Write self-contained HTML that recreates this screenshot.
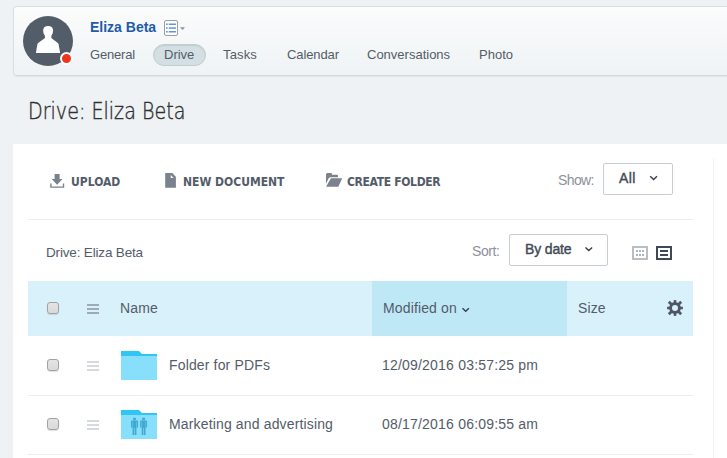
<!DOCTYPE html>
<html><head><meta charset="utf-8">
<style>
*{box-sizing:border-box;margin:0;padding:0}
html,body{width:727px;height:458px;overflow:hidden}
body{background:#eef2f4;font-family:"Liberation Sans",Arial,sans-serif;color:#535c69;position:relative;font-size:14px}
.abs{position:absolute;white-space:nowrap}
#hdr{left:13px;top:6px;width:730px;height:70px;border:1px solid #d8dfe3;border-bottom-color:#d3dadf;border-radius:4px 0 0 4px;background:linear-gradient(#fbfcfc,#eff3f5);box-shadow:0 1px 1px rgba(0,0,0,.05)}
#avatar{left:23px;top:16px;width:50px;height:50px;border-radius:50%;background:#535c69;overflow:hidden}
#dot{left:60px;top:52px;width:13px;height:13px;border-radius:50%;background:#ee351c;border:2px solid #fff}
#uname{left:90px;top:19px;font-size:14px;font-weight:bold;color:#1f5ba8;line-height:16px}
.tab{top:47px;font-size:13px;line-height:16px;color:#535c69}
#pill{left:153px;top:44px;width:53px;height:22px;border-radius:11px;background:#d3dfe3;border:1px solid #c0cdd2;box-shadow:inset 0 1px 1px rgba(0,0,0,.08)}
#title{left:28px;top:96px;font-size:22.4px;line-height:30px;color:#333;font-family:"DejaVu Sans Light","DejaVu Sans",sans-serif;font-weight:200;transform-origin:0 0;transform:scaleX(.853);-webkit-text-stroke:.38px #2d2d2d}
#panel{left:13px;top:144px;width:714px;height:330px;background:#fff}
.btn{top:174px;font-family:"DejaVu Sans Condensed","DejaVu Sans",sans-serif;font-weight:bold;font-size:12px;line-height:16px;color:#535c69}
.hr{height:1px;background:#ededee}
.lbl{color:#8c929a;font-size:14px;line-height:16px;letter-spacing:-.5px}
.sel{border:1px solid #c6cdd3;border-radius:2px;background:#fff}
.selt{font-size:14px;line-height:16px;color:#424956;-webkit-text-stroke:.4px #424956}
#thead{left:28px;top:281px;width:665px;height:55px;background:#d9f1fb}
#thmod{left:372px;top:281px;width:195px;height:55px;background:#bfe8f7}
.th{top:300px;font-size:14px;line-height:16px;color:#535c69;letter-spacing:.14px}
.cb{width:12px;height:12px;border:1px solid #a2a2a2;border-radius:3px;background:linear-gradient(#e4e4e4,#dadada);box-shadow:0 1px 1px rgba(0,0,0,.12)}
.row{font-size:14px;line-height:16px;color:#535c69;letter-spacing:.15px}
svg{overflow:visible}
</style></head><body>
<div id="hdr" class="abs"></div>
<div id="avatar" class="abs"><svg width="50" height="50" viewBox="0 0 50 50"><path d="M25.100 9.900C22 9.900 20.300 11.500 20.200 14c-.1 2 .4 4 1.600 5.500l.2 2.500-6.500 4.800c-.7.500-1 1-1.200 1.800l-1.400 8.300h24.200l-1.400-8.300c-.2-.8-.5-1.300-1.200-1.800L28.300 22l.2-2.500c1.200-1.500 1.700-3.500 1.600-5.500-.1-2.500-1.900-4.100-5-4.100z" fill="#fff"/></svg></div>
<div id="dot" class="abs"></div>
<div id="uname" class="abs">Eliza Beta</div>
<svg class="abs" style="left:164px;top:20px" width="24" height="17" viewBox="0 0 24 17"><rect x=".5" y=".5" width="13" height="15" rx="1.500" fill="#fff" stroke="#9a9fa5"/><g fill="#6595d3"><rect x="2" y="3.500" width="1.700" height="1.500"/><rect x="4.700" y="3.500" width="7.300" height="1.500"/><rect x="2" y="7.300" width="1.700" height="1.500"/><rect x="4.700" y="7.300" width="7.300" height="1.500"/><rect x="2" y="11" width="1.700" height="1.500"/><rect x="4.700" y="11" width="7.300" height="1.500"/></g><path d="M16 7.300h5l-2.500 2.700z" fill="#8b929b"/></svg>
<div id="pill" class="abs"></div>
<div class="abs tab" style="left:90px;letter-spacing:-.2px">General</div>
<div class="abs tab" style="left:164px">Drive</div>
<div class="abs tab" style="left:223px;letter-spacing:.15px">Tasks</div>
<div class="abs tab" style="left:287px;letter-spacing:-.1px">Calendar</div>
<div class="abs tab" style="left:367px">Conversations</div>
<div class="abs tab" style="left:479px">Photo</div>
<div id="title" class="abs">Drive: Eliza Beta</div>
<div id="panel" class="abs"></div>
<div class="abs" style="left:713px;top:159px;width:1px;height:300px;background:#eef0f2"></div>

<svg class="abs" style="left:0;top:0" width="727" height="458" viewBox="0 0 727 458">
<g fill="#7b818d">
<path d="M54.600 174h5v5h2.900l-5.400 5.800-5.400-5.800h2.900z"/>
<path d="M50.200 183.500h1.400v2.900h11.200v-2.900h1.400v4.300h-14z"/>
<path d="M165.200 173h7.100l3.600 3.800v10.900h-10.700z"/>
<path d="M326 174.500q0-1.500 1.500-1.500h3.200q1.300 0 1.300 1.300v.5h5q1 0 1 1v1.400h-7.200q-1.500 0-2.200 1.400l-2.600 5.200z"/>
<path d="M330.900 178.200h11.300l-3.900 8.500h-12.200z"/>
</g>
<path d="M170.700 175v3h3z" fill="#fff"/>
<rect x="633" y="247" width="14" height="12" fill="none" stroke="#b9bec5" stroke-width="2"/>
<g fill="#aeb4bb"><rect x="636" y="250" width="2" height="2"/><rect x="639" y="250" width="2" height="2"/><rect x="642" y="250" width="2" height="2"/><rect x="636" y="254" width="2" height="2"/><rect x="639" y="254" width="2" height="2"/><rect x="642" y="254" width="2" height="2"/></g>
</svg>

<div class="abs btn" style="left:71px">UPLOAD</div>
<div class="abs btn" style="left:183px">NEW DOCUMENT</div>
<div class="abs btn" style="left:347px;letter-spacing:-.33px">CREATE FOLDER</div>
<div class="abs lbl" style="left:558px;top:172px;letter-spacing:-.6px">Show:</div>
<div class="abs sel" style="left:603px;top:163px;width:70px;height:32px"></div>
<div class="abs selt" style="left:619px;top:170px;letter-spacing:.45px">All</div>
<div class="abs hr" style="left:28px;top:219px;width:665px"></div>
<div class="abs" style="left:46px;top:244.5px;font-size:13.5px;line-height:16px;color:#535c69;letter-spacing:-.17px">Drive: Eliza Beta</div>
<div class="abs lbl" style="left:472px;top:243px;letter-spacing:-.4px">Sort:</div>
<div class="abs sel" style="left:509px;top:234px;width:99px;height:32px"></div>
<div class="abs selt" style="left:525px;top:241px;letter-spacing:-.15px">By date</div>

<div id="thead" class="abs"></div>
<div id="thmod" class="abs"></div>
<div class="abs cb" style="left:47px;top:302px"></div>
<div class="abs th" style="left:120px">Name</div>
<div class="abs th" style="left:383px">Modified on</div>
<div class="abs th" style="left:578px">Size</div>

<div class="abs cb" style="left:47px;top:359px"></div>
<div class="abs row" style="left:169px;top:357px">Folder for PDFs</div>
<div class="abs row" style="left:382px;top:357px;letter-spacing:.2px">12/09/2016 03:57:25 pm</div>
<div class="abs hr" style="left:28px;top:395px;width:665px"></div>
<div class="abs cb" style="left:47px;top:418px"></div>
<div class="abs row" style="left:169px;top:416px">Marketing and advertising</div>
<div class="abs row" style="left:382px;top:416px;letter-spacing:.2px">08/17/2016 06:09:55 am</div>
<div class="abs hr" style="left:28px;top:454px;width:665px"></div>

<svg class="abs" style="left:0;top:0" width="727" height="458" viewBox="0 0 727 458">
<g fill="none" stroke="#3b424e" stroke-width="1.450"><path d="M650.200 176.200l3.400 3.300 3.400-3.300"/><path d="M585.500 247.400l3.300 3.200 3.300-3.200"/><path d="M462.500 308.200l3.200 3.100 3.200-3.100"/></g>
<rect x="657" y="247" width="14" height="12" fill="none" stroke="#3f4856" stroke-width="2"/>
<rect x="660" y="250" width="8" height="2" fill="#3f4856"/><rect x="660" y="254" width="8" height="2" fill="#3f4856"/>
<g fill="#9cacb6"><rect x="87" y="304" width="12" height="2"/><rect x="87" y="308" width="12" height="2"/><rect x="87" y="312" width="12" height="2"/></g>
<g fill="#d6d9dd"><rect x="87" y="361" width="12" height="2"/><rect x="87" y="365" width="12" height="2"/><rect x="87" y="369" width="12" height="2"/>
<rect x="87" y="420" width="12" height="2"/><rect x="87" y="424" width="12" height="2"/><rect x="87" y="428" width="12" height="2"/></g>
<g id="gear" transform="translate(675 308)" fill="#4f5765">
<path fill-rule="evenodd" d="M0-5.900a5.900 5.900 0 1 0 0 11.800a5.900 5.900 0 1 0 0-11.800zM0-3a3 3 0 1 1 0 6a3 3 0 1 1 0-6z"/>
<g><rect x="-1.300" y="-7.900" width="2.600" height="3.500"/><rect x="-1.300" y="4.400" width="2.600" height="3.500"/></g>
<g transform="rotate(90)"><rect x="-1.300" y="-7.900" width="2.600" height="3.500"/><rect x="-1.300" y="4.400" width="2.600" height="3.500"/></g><g transform="rotate(45)"><rect x="-1.400" y="-8.700" width="2.800" height="4"/><rect x="-1.400" y="4.700" width="2.800" height="4"/></g><g transform="rotate(135)"><rect x="-1.400" y="-8.700" width="2.800" height="4"/><rect x="-1.400" y="4.700" width="2.800" height="4"/></g>
</g>
<g id="f1"><path d="M121 351h18l3 3h15v2h-36z" fill="#2fc6f6"/><rect x="121" y="356" width="36" height="24" fill="#87dffb"/></g>
<g transform="translate(0 59)"><path d="M121 351h18l3 3h15v2h-36z" fill="#2fc6f6"/><rect x="121" y="356" width="36" height="24" fill="#87dffb"/></g>
<g fill="#3fa9d3">
<g><rect x="133" y="417.800" width="3" height="2.400" rx="1"/><path d="M131 421.600q0-1 1-1h5q1 0 1 1v6h-1v-5.500h-.4v6h-4.200v-6h-.4v5.500h-1z"/><rect x="132.600" y="428" width="1.600" height="7"/><rect x="134.800" y="428" width="1.600" height="7"/></g>
<g transform="translate(9.100 0)"><rect x="133" y="417.800" width="3" height="2.400" rx="1"/><path d="M131 421.600q0-1 1-1h5q1 0 1 1v6h-1v-5.500h-.4v6h-4.200v-6h-.4v5.500h-1z"/><rect x="132.600" y="428" width="1.600" height="7"/><rect x="134.800" y="428" width="1.600" height="7"/></g>
</g>
</svg>
</body></html>
